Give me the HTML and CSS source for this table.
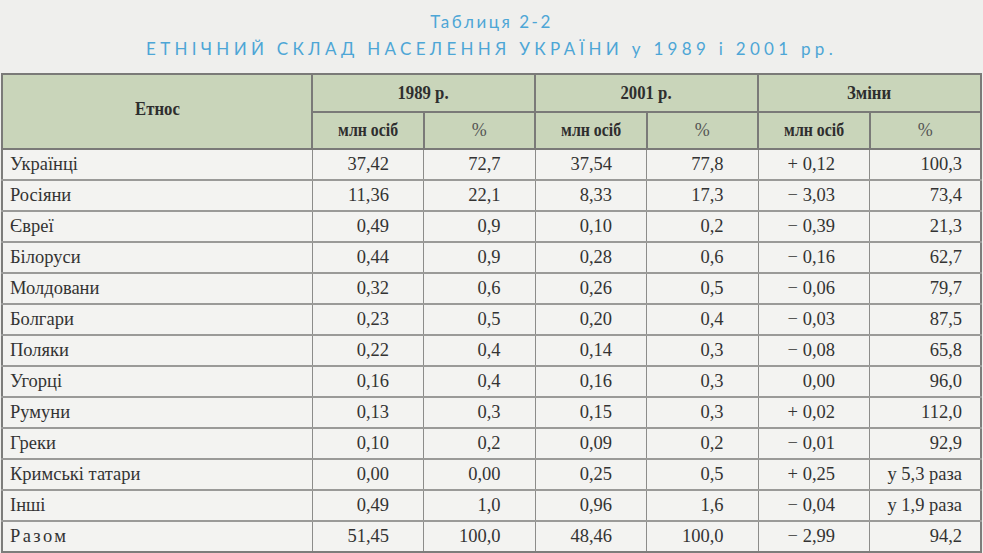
FILE: index.html
```html
<!DOCTYPE html>
<html lang="uk">
<head>
<meta charset="utf-8">
<title>Таблиця 2-2</title>
<link rel="stylesheet" href="styles.css">
</head>
<body>
<div class="page">
  <header class="caption">
    <div class="caption-num">Таблиця 2-2</div>
    <div class="caption-title">ЕТНІЧНИЙ СКЛАД НАСЕЛЕННЯ УКРАЇНИ у 1989 і 2001 рр.</div>
  </header>
  <table class="data">
    <colgroup>
      <col class="c-name">
      <col class="c-n"><col class="c-n">
      <col class="c-n"><col class="c-n">
      <col class="c-n"><col class="c-n">
    </colgroup>
    <thead>
      <tr class="h1">
        <th rowspan="2" class="h-name"><span class="nar">Етнос</span></th>
        <th colspan="2"><span class="nar">1989 р.</span></th>
        <th colspan="2"><span class="nar">2001 р.</span></th>
        <th colspan="2"><span class="nar">Зміни</span></th>
      </tr>
      <tr class="h2">
        <th><span class="nar">млн осіб</span></th><th class="pct">%</th>
        <th><span class="nar">млн осіб</span></th><th class="pct">%</th>
        <th><span class="nar">млн осіб</span></th><th class="pct">%</th>
      </tr>
    </thead>
    <tbody>
      <tr><td class="name">Українці</td><td>37,42</td><td>72,7</td><td>37,54</td><td>77,8</td><td>+ 0,12</td><td class="last">100,3</td></tr>
      <tr><td class="name">Росіяни</td><td>11,36</td><td>22,1</td><td>8,33</td><td>17,3</td><td>− 3,03</td><td class="last">73,4</td></tr>
      <tr><td class="name">Євреї</td><td>0,49</td><td>0,9</td><td>0,10</td><td>0,2</td><td>− 0,39</td><td class="last">21,3</td></tr>
      <tr><td class="name">Білоруси</td><td>0,44</td><td>0,9</td><td>0,28</td><td>0,6</td><td>− 0,16</td><td class="last">62,7</td></tr>
      <tr><td class="name">Молдовани</td><td>0,32</td><td>0,6</td><td>0,26</td><td>0,5</td><td>− 0,06</td><td class="last">79,7</td></tr>
      <tr><td class="name">Болгари</td><td>0,23</td><td>0,5</td><td>0,20</td><td>0,4</td><td>− 0,03</td><td class="last">87,5</td></tr>
      <tr><td class="name">Поляки</td><td>0,22</td><td>0,4</td><td>0,14</td><td>0,3</td><td>− 0,08</td><td class="last">65,8</td></tr>
      <tr><td class="name">Угорці</td><td>0,16</td><td>0,4</td><td>0,16</td><td>0,3</td><td>0,00</td><td class="last">96,0</td></tr>
      <tr><td class="name">Румуни</td><td>0,13</td><td>0,3</td><td>0,15</td><td>0,3</td><td>+ 0,02</td><td class="last">112,0</td></tr>
      <tr><td class="name">Греки</td><td>0,10</td><td>0,2</td><td>0,09</td><td>0,2</td><td>− 0,01</td><td class="last">92,9</td></tr>
      <tr><td class="name">Кримські татари</td><td>0,00</td><td>0,00</td><td>0,25</td><td>0,5</td><td>+ 0,25</td><td class="last">у 5,3 раза</td></tr>
      <tr><td class="name">Інші</td><td>0,49</td><td>1,0</td><td>0,96</td><td>1,6</td><td>− 0,04</td><td class="last">у 1,9 раза</td></tr>
      <tr class="total"><td class="name">Разом</td><td>51,45</td><td>100,0</td><td>48,46</td><td>100,0</td><td>− 2,99</td><td class="last">94,2</td></tr>
    </tbody>
  </table>
</div>
</body>
</html>
```
FILE: styles.css
```css
html, body {
  margin: 0;
  padding: 0;
  background: #efefed;
}
.page {
  width: 983px;
  height: 553px;
  overflow: hidden;
  padding-top: 12px;
  box-sizing: border-box;
}
.caption {
  text-align: center;
  color: #4da6d6;
  font-family: "Lato", "DejaVu Sans", sans-serif;
  font-weight: 400;
}
.caption-num {
  font-size: 17px;
  letter-spacing: 2.5px;
  line-height: 20px;
}
.caption-title {
  font-size: 17px;
  letter-spacing: 4.3px;
  line-height: 24px;
  margin-top: 5px;
}
.data {
  margin-top: 12px;
  margin-left: 1px;
  width: 979px;
  border-collapse: collapse;
  table-layout: fixed;
  font-family: "Liberation Serif", "Times New Roman", serif;
  font-size: 18.5px;
  color: #333333;
  background: #f3f3f1;
  border: 2px solid #7d7d7b;
}
.c-name { width: 310px; }
.c-n { width: 111.5px; }
.data th {
  background: #c9d5ba;
  font-weight: bold;
  color: #2e2e2e;
  font-size: 19px;
  border: 2px solid #7a7a78;
  padding: 0;
  text-align: center;
}
.nar {
  display: inline-block;
  transform: scaleX(0.88);
}
.h1 th { height: 36px; }
.h-name { padding-bottom: 6px !important; }
.h2 th { height: 35px; font-size: 18px; }
.data th.pct { font-weight: normal; font-size: 18px; color: #555; }
.data td {
  border: 1px solid #8c8c8a;
  border-top: 2px solid #9a9a98;
  height: 29px;
  padding: 0 34px 0 0;
  text-align: right;
  white-space: nowrap;
}
.data td.name {
  text-align: left;
  padding: 0 0 0 7px;
}
.data td.last { padding-right: 18px; }
.total td.name { letter-spacing: 2.4px; }
```
